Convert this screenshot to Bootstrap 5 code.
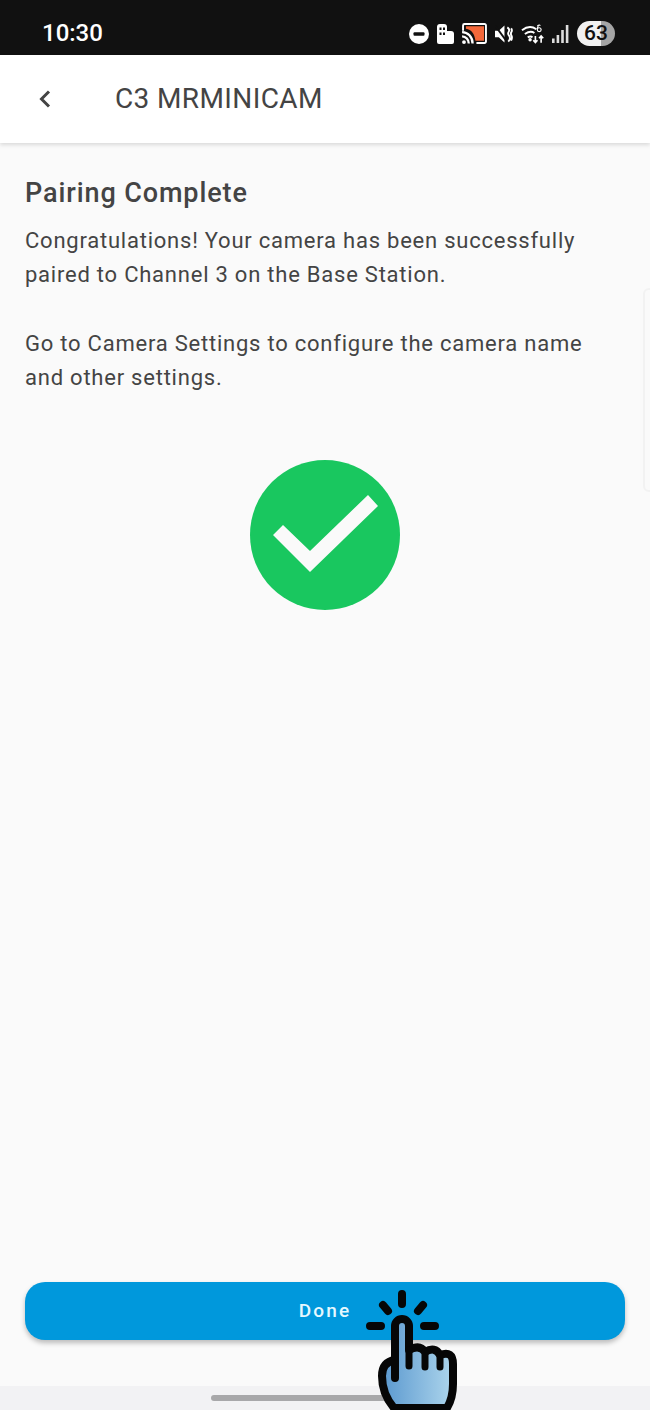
<!DOCTYPE html>
<html lang="en">
<head>
<meta charset="utf-8">
<title>Pairing Complete</title>
<link href="https://cdn.jsdelivr.net/npm/bootstrap@5.3.0/dist/css/bootstrap.min.css" rel="stylesheet">
<style>
html,body{margin:0;height:1410px;overflow:hidden;background:#fafafa}
body{font-family:Roboto,"Liberation Sans",sans-serif;color:#444}
.screen{position:relative;width:650px;height:1410px;overflow:hidden;background:#fafafa}
.status-strip{height:55px;background:#111;color:#fff;padding:12px 35px 0 42px}
.clock{font-size:24px;font-weight:500;line-height:1;position:relative;top:-1px}
.status-icons{gap:8px}
.status-icons svg{display:block;flex:none}
.batt{width:38px;height:25px;border-radius:13px;background:linear-gradient(90deg,#f1f1f1 62%,#a5a5a5 62%);color:#111;font-size:21px;font-weight:500;line-height:25px;text-align:center}
.app-head{height:88px;background:#fff;box-shadow:0 2px 4px rgba(0,0,0,.13);position:relative;padding-left:38px}
.head-title{font-size:28px;font-weight:400;color:#444;margin:0 0 0 64px;letter-spacing:.38px}
.pane{flex:1 1 auto;padding:32px 25px 0}
.pane-title{font-size:27px;font-weight:500;color:#444;line-height:36px;margin:0 0 13px;letter-spacing:.9px}
.pane-text{font-size:22px;line-height:34.3px;letter-spacing:.77px;color:#444;margin:0}
.tick-wrap{margin-top:65px}
.foot-zone{padding:0 25px 46px}
.btn-done{height:58px;border-radius:20px;background:#0098dc;border:0;color:#e6f8ff;font-size:19px;font-weight:500;letter-spacing:2.2px;box-shadow:0 3px 5px rgba(0,0,0,.25)}
.btn-done:hover{background:#0098dc;color:#e6f8ff}
.nav-strip{height:24px;background:#f2f2f4;padding-top:9px}
.nav-pill{width:228px;height:6px;border-radius:3px;background:#a8a8aa;margin-left:211px}
.edge-handle{position:absolute;left:643px;top:288px;width:12px;height:204px;border:2px solid #f2f2f2;border-radius:7px}
.tap-hand{position:absolute;left:360px;top:1285px}
</style>
</head>
<body>
<div class="screen d-flex flex-column">
  <div class="status-strip d-flex align-items-center justify-content-between flex-shrink-0">
    <span class="clock">10:30</span>
    <div class="status-icons d-flex align-items-center">
      <svg width="20" height="20" viewBox="0 0 20 20"><circle cx="10" cy="10" r="10" fill="#fff"/><rect x="4.500" y="8.200" width="11" height="3.600" rx="1" fill="#111"/></svg>
      <svg width="17" height="20" viewBox="0 0 17 20"><path d="M0 3a3 3 0 0 1 3-3h4a3 3 0 0 1 3 3v17H2a2 2 0 0 1-2-2z" fill="#fff"/><path d="M10 7h4a3 3 0 0 1 3 3v8a2 2 0 0 1-2 2h-5z" fill="#fff"/><path d="M2.500 3.500h2v2.500h-2zM6 3.500h2v2.500H6zM2.500 8.500h2V11h-2zM6 8.500h2V11H6z" fill="#111"/></svg>
      <svg width="25" height="21" viewBox="0 0 26 22"><path d="M1 8V2.500A1.500 1.500 0 0 1 2.500 1h21A1.500 1.500 0 0 1 25 2.500v17a1.500 1.500 0 0 1-1.500 1.500H15" fill="none" stroke="#fff" stroke-width="2"/><path d="M4 3.500h19v15H14C13 11 10 7 4 6z" fill="#f4683a"/><path d="M0 9.500c6 0 11 5 11 12M0 14c4 0 7 3.500 7 7.500" fill="none" stroke="#fff" stroke-width="2.400"/><circle cx="2" cy="20" r="2" fill="#fff"/></svg>
      <svg width="18" height="20" viewBox="0 0 19 20"><path d="M0 6.500h4L10 1v18L4 13.500H0z" fill="#fff"/><path d="M0 1l11 15" stroke="#111" stroke-width="2"/><path d="M13 3q3 2 1.500 4.500T15 12q2 3-1 6M17 4q1.500 2 .3 4t.2 4q1 2-.5 5" fill="none" stroke="#fff" stroke-width="2"/></svg>
      <svg width="23" height="20" viewBox="0 0 24 20"><path d="M1 6q8-6 15-1M4 10q6-4 10-1M7 13.500q3-2 5 0" fill="none" stroke="#fff" stroke-width="2"/><circle cx="9.500" cy="16" r="1.800" fill="#fff"/><path d="M15 12v7M12.800 16.500l2.200 2.500 2.200-2.500M21 19v-7M18.800 14.500L21 12l2.200 2.500" fill="none" stroke="#fff" stroke-width="1.700"/><path d="M17 1.500c2-1.500 3-.5 3 0M17 5.500a2 2 0 1 0 4 0 2 2 0 1 0-4 0M17 5.500c0-2 .5-3 1-4" fill="none" stroke="#fff" stroke-width="1.200"/></svg>
      <svg width="17" height="18" viewBox="0 0 17 18"><rect x="0" y="13.500" width="2.600" height="4.500" fill="#ddd"/><rect x="4.600" y="10" width="2.600" height="8" fill="#ddd"/><rect x="9.200" y="5" width="2.600" height="13" fill="#ddd"/><rect x="13.800" y="0" width="2.600" height="18" fill="#ddd"/></svg>
      <div class="batt">63</div>
    </div>
  </div>
  <div class="app-head d-flex align-items-center flex-shrink-0">
    <svg width="13" height="20" viewBox="0 0 13 20"><path d="M11 2.500L3.500 10l7.500 7.500" fill="none" stroke="#444" stroke-width="3"/></svg>
    <h1 class="head-title">C3 MRMINICAM</h1>
  </div>
  <div class="pane">
    <h2 class="pane-title">Pairing Complete</h2>
    <p class="pane-text">Congratulations! Your camera has been successfully paired to Channel 3 on the Base Station.</p>
    <p class="pane-text mt-0">&nbsp;</p>
    <p class="pane-text">Go to Camera Settings to configure the camera name and other settings.</p>
    <div class="tick-wrap d-flex justify-content-center">
      <svg width="150" height="150" viewBox="0 0 150 150"><circle cx="75" cy="75" r="75" fill="#19c75f"/><polygon points="23,75 33,65 60,91 118,35 128,46 60,112" fill="#fafafa"/></svg>
    </div>
  </div>
  <div class="foot-zone flex-shrink-0">
    <button type="button" class="btn btn-done w-100 d-block">Done</button>
  </div>
  <div class="nav-strip flex-shrink-0"><div class="nav-pill"></div></div>
  <div class="edge-handle"></div>
  <svg class="tap-hand" width="100" height="125" viewBox="360 1285 100 125">
    <defs><linearGradient id="handfill" x1="0" x2="1" y1="0" y2="0"><stop offset="0" stop-color="#5a98cf"/><stop offset="1" stop-color="#add5ec"/></linearGradient></defs>
    <path d="M395 1378V1326a7 7 0 0 1 14 0V1350Q420 1344 425 1352Q435 1346 440 1355Q453 1350 453 1364V1384Q453 1398 447 1408H394Q382 1394 382 1376Q382 1362 395 1360" fill="url(#handfill)" stroke="#060606" stroke-width="8" stroke-linejoin="round" stroke-linecap="round"/>
    <path d="M409 1350V1366M425 1352V1367M440 1355V1367" fill="none" stroke="#060606" stroke-width="7" stroke-linecap="round"/>
    <path d="M402 1294V1304M383 1305L388 1311M423 1305L418 1311M370 1326H381M424 1326H435" fill="none" stroke="#060606" stroke-width="8" stroke-linecap="round"/>
  </svg>
</div>
<script src="https://cdn.jsdelivr.net/npm/bootstrap@5.3.0/dist/js/bootstrap.bundle.min.js"></script>
</body>
</html>
